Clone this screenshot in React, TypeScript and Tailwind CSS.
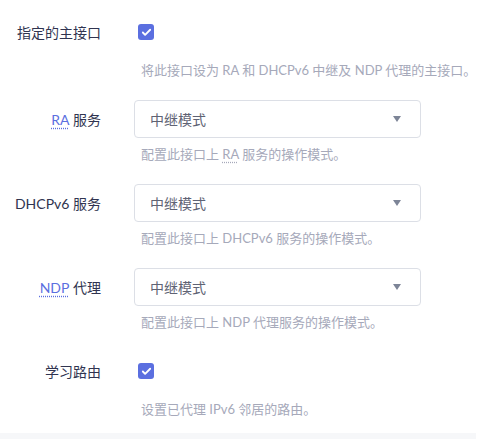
import { Check } from "lucide-react";

const font = {
  fontFamily: 'Lato, "Noto Sans CJK SC", sans-serif',
};

function Abbr({ children, muted }: { children: string; muted?: boolean }) {
  return (
    <span
      className={
        muted
          ? "underline decoration-dotted decoration-[#a6a9ba] underline-offset-[3px]"
          : "text-[#5b6fe0] underline decoration-dotted decoration-[#5b6fe0] underline-offset-[3px]"
      }
    >
      {children}
    </span>
  );
}

function Checkbox() {
  return (
    <div className="flex h-[38px] items-center pl-[4px]">
      <span className="flex h-[16px] w-[16px] items-center justify-center rounded-[3px] bg-[#5b6fe0]">
        <Check className="h-[11px] w-[11px] text-white" strokeWidth={4} />
      </span>
    </div>
  );
}

function Select({ value }: { value: string }) {
  return (
    <div className="flex h-[38px] w-[287px] items-center justify-between rounded-[4px] border border-[#dcdfe6] bg-white pl-[15px] pr-[19px] text-[14px] text-[#5f6374]">
      <span>{value}</span>
      <span className="h-0 w-0 border-x-[4px] border-t-[6px] border-x-transparent border-t-[#7d8597]" />
    </div>
  );
}

function Row({
  label,
  control,
  desc,
  descGap,
}: {
  label: React.ReactNode;
  control: React.ReactNode;
  desc: React.ReactNode;
  descGap: string;
}) {
  return (
    <div className="flex gap-[33px]">
      <div className="flex h-[38px] w-[101px] shrink-0 items-center justify-end whitespace-nowrap text-[14px] text-[#303450]">
        {label}
      </div>
      <div className="flex flex-col">
        {control}
        <div className={`${descGap} whitespace-nowrap pl-[7px] text-[13px] leading-[20px] text-[#a6a9ba]`}>
          {desc}
        </div>
      </div>
    </div>
  );
}

export default function App() {
  return (
    <div className="min-h-[439px] bg-white" style={font}>
      <div className="flex flex-col gap-[20px] pb-[14px] pt-[13px]">
        <Row
          label="指定的主接口"
          control={<Checkbox />}
          descGap="mt-[9px]"
          desc="将此接口设为 RA 和 DHCPv6 中继及 NDP 代理的主接口。"
        />
        <Row
          label={
            <>
              <Abbr>RA</Abbr>&nbsp;服务
            </>
          }
          control={<Select value="中继模式" />}
          descGap="mt-[6px]"
          desc={
            <>
              配置此接口上 <Abbr muted>RA</Abbr> 服务的操作模式。
            </>
          }
        />
        <Row
          label="DHCPv6 服务"
          control={<Select value="中继模式" />}
          descGap="mt-[6px]"
          desc="配置此接口上 DHCPv6 服务的操作模式。"
        />
        <Row
          label={
            <>
              <Abbr>NDP</Abbr>&nbsp;代理
            </>
          }
          control={<Select value="中继模式" />}
          descGap="mt-[6px]"
          desc="配置此接口上 NDP 代理服务的操作模式。"
        />
        <Row
          label="学习路由"
          control={<Checkbox />}
          descGap="mt-[9px]"
          desc="设置已代理 IPv6 邻居的路由。"
        />
      </div>
      <div className="h-[20px] w-[476px] bg-[#f6f7f9]" />
    </div>
  );
}
